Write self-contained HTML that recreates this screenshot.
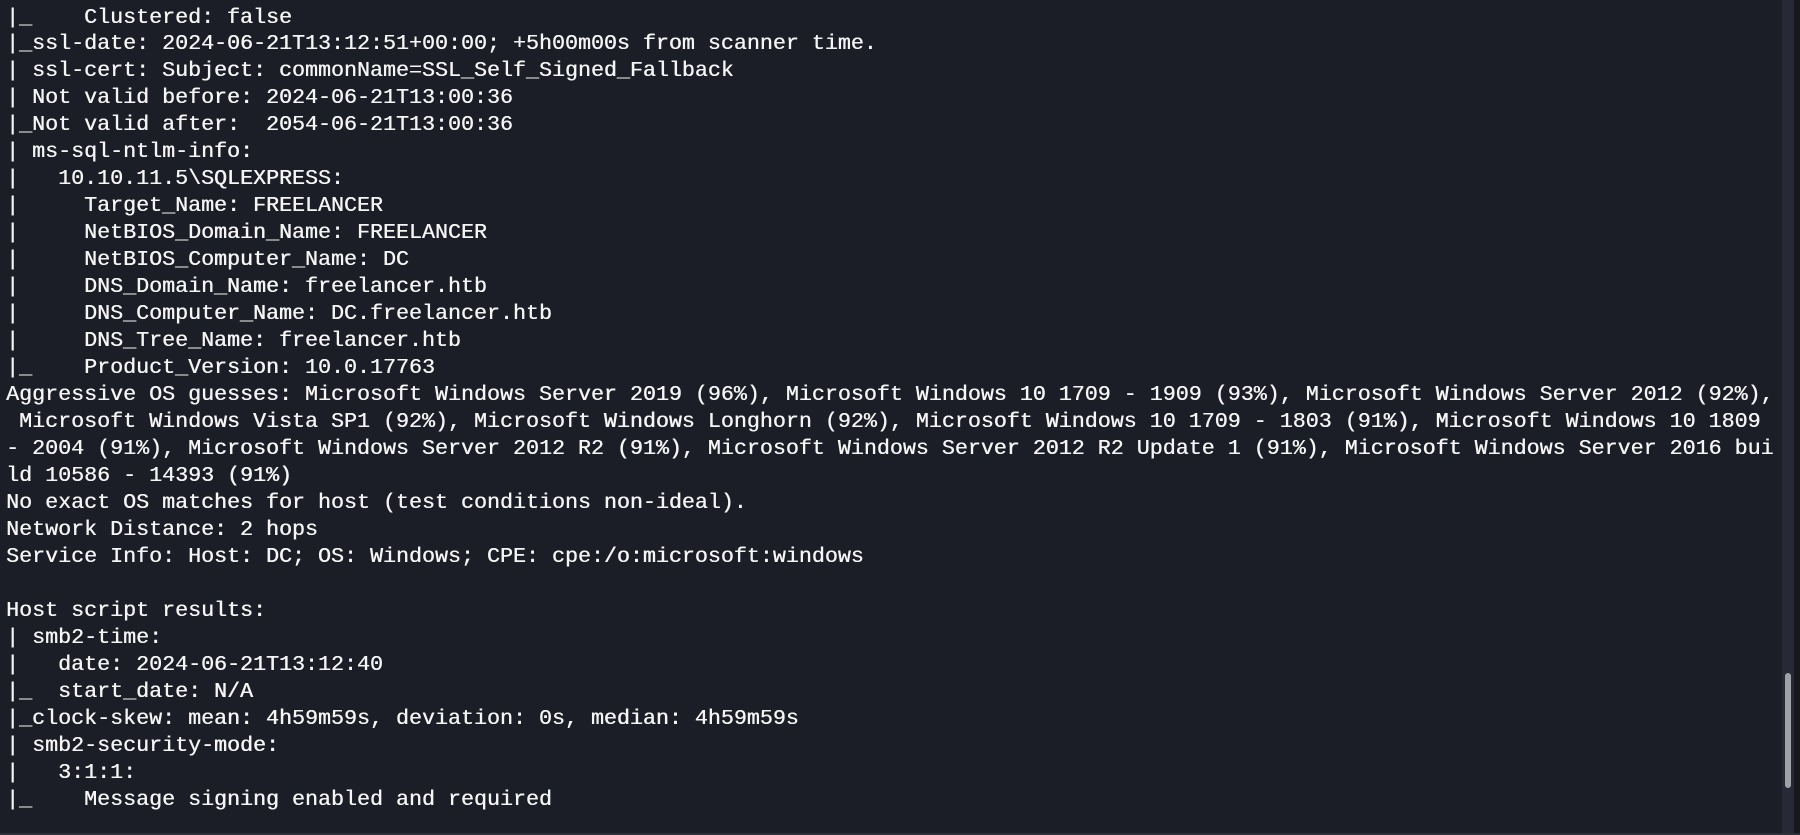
<!DOCTYPE html>
<html><head><meta charset="utf-8"><style>
html,body{margin:0;padding:0;width:1800px;height:835px;overflow:hidden;background:#1b1e26;}
pre{position:absolute;left:6px;top:4.5px;margin:0;font-family:"Liberation Mono",monospace;font-size:21.67px;line-height:26.97px;color:#f5f5f5;white-space:pre;text-shadow:0.4px 0 0 #f5f5f5;}
.track{position:absolute;left:1782px;top:0;width:12px;height:835px;background:#272a36;}
.thumb{position:absolute;left:1785px;top:673px;width:6px;height:115px;background:#a0a1a5;border-radius:3px;}
.edge{position:absolute;left:1794px;top:0;width:6px;height:835px;background:#16181e;}
.bot{position:absolute;left:0;top:833px;width:1800px;height:2px;background:#2c2f38;}
</style></head><body>
<pre>|_    Clustered: false
|_ssl-date: 2024-06-21T13:12:51+00:00; +5h00m00s from scanner time.
| ssl-cert: Subject: commonName=SSL_Self_Signed_Fallback
| Not valid before: 2024-06-21T13:00:36
|_Not valid after:  2054-06-21T13:00:36
| ms-sql-ntlm-info:
|   10.10.11.5\SQLEXPRESS:
|     Target_Name: FREELANCER
|     NetBIOS_Domain_Name: FREELANCER
|     NetBIOS_Computer_Name: DC
|     DNS_Domain_Name: freelancer.htb
|     DNS_Computer_Name: DC.freelancer.htb
|     DNS_Tree_Name: freelancer.htb
|_    Product_Version: 10.0.17763
Aggressive OS guesses: Microsoft Windows Server 2019 (96%), Microsoft Windows 10 1709 - 1909 (93%), Microsoft Windows Server 2012 (92%),
 Microsoft Windows Vista SP1 (92%), Microsoft Windows Longhorn (92%), Microsoft Windows 10 1709 - 1803 (91%), Microsoft Windows 10 1809
- 2004 (91%), Microsoft Windows Server 2012 R2 (91%), Microsoft Windows Server 2012 R2 Update 1 (91%), Microsoft Windows Server 2016 bui
ld 10586 - 14393 (91%)
No exact OS matches for host (test conditions non-ideal).
Network Distance: 2 hops
Service Info: Host: DC; OS: Windows; CPE: cpe:/o:microsoft:windows

Host script results:
| smb2-time:
|   date: 2024-06-21T13:12:40
|_  start_date: N/A
|_clock-skew: mean: 4h59m59s, deviation: 0s, median: 4h59m59s
| smb2-security-mode:
|   3:1:1:
|_    Message signing enabled and required</pre>
<div class="track"></div><div class="thumb"></div><div class="edge"></div><div class="bot"></div>
</body></html>
